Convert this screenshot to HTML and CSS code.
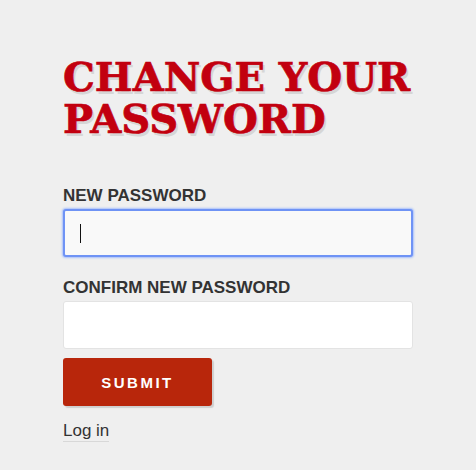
FILE: index.html
```html
<!DOCTYPE html>
<html>
    <head>
        <title>Change Your Password</title>
        <link rel="stylesheet" href="styles.css">
    </head>
    <body>
        <div class="wrap">
            <h1 class="title">Change your<br>password</h1>
            <form class="pw-form">
                <label class="field-label" for="new_password">New password</label>
                <div class="field-box">
                    <input type="password" id="new_password" class="field focused" />
                    <span class="caret"></span>
                </div>
                <label class="field-label" for="confirm_password">Confirm new password</label>
                <div class="field-box last">
                    <input type="password" id="confirm_password" class="field" />
                </div>
                <button type="button" class="submit-button">Submit</button>
            </form>
            <a class="login-link" href="#">Log in</a>
        </div>
    </body>
</html>
```

FILE: styles.css
```css
body {
    margin: 0;
    background-color: #efefef;
    font-family: "Liberation Sans", Arial, sans-serif;
    color: #333;
}
.wrap {
    padding: 56px 0 0 63px;
    width: 350px;
}
.title {
    margin: 0;
    font-family: "DejaVu Serif", serif;
    font-weight: bold;
    font-size: 40px;
    line-height: 42px;
    white-space: nowrap;
    text-transform: uppercase;
    color: #c2000f;
    -webkit-text-stroke: 0.7px #c2000f;
    text-shadow: 2px 3px 0 #d6d6d6;
}
.pw-form {
    margin-top: 47px;
}
.field-label {
    display: block;
    font-weight: bold;
    font-size: 17px;
    line-height: 18px;
    text-transform: uppercase;
    color: #333;
}
.field-box {
    position: relative;
    margin: 4px 0 22px 0;
}
.field-box.last {
    margin-bottom: 9px;
}
.caret {
    position: absolute;
    left: 17px;
    top: 15px;
    width: 1px;
    height: 19px;
    background-color: #111;
}
.field {
    display: block;
    width: 350px;
    height: 48px;
    margin: 0;
    padding: 0 16px;
    box-sizing: border-box;
    border: 1px solid #e3e3e3;
    border-radius: 3px;
    background-color: #fff;
    font-size: 16px;
}
.field.focused {
    background-color: #f9f9f9;
    border: 2px solid #6f93f5;
    box-shadow: 0 0 2px 1px #a8c0fb;
    outline: none;
}
.submit-button {
    display: block;
    width: 149px;
    height: 48px;
    border: none;
    border-radius: 3px;
    background-color: #b8260b;
    color: white;
    font-family: "Liberation Sans", Arial, sans-serif;
    font-weight: bold;
    font-size: 15px;
    letter-spacing: 2.5px;
    text-transform: uppercase;
    box-shadow: 2px 2px 1px #cfcfcf;
    cursor: pointer;
}
.login-link {
    display: inline-block;
    margin-top: 15px;
    font-size: 17px;
    color: #333;
    text-decoration: none;
    border-bottom: 1px solid #d8d8d8;
    line-height: 20px;
}
```
